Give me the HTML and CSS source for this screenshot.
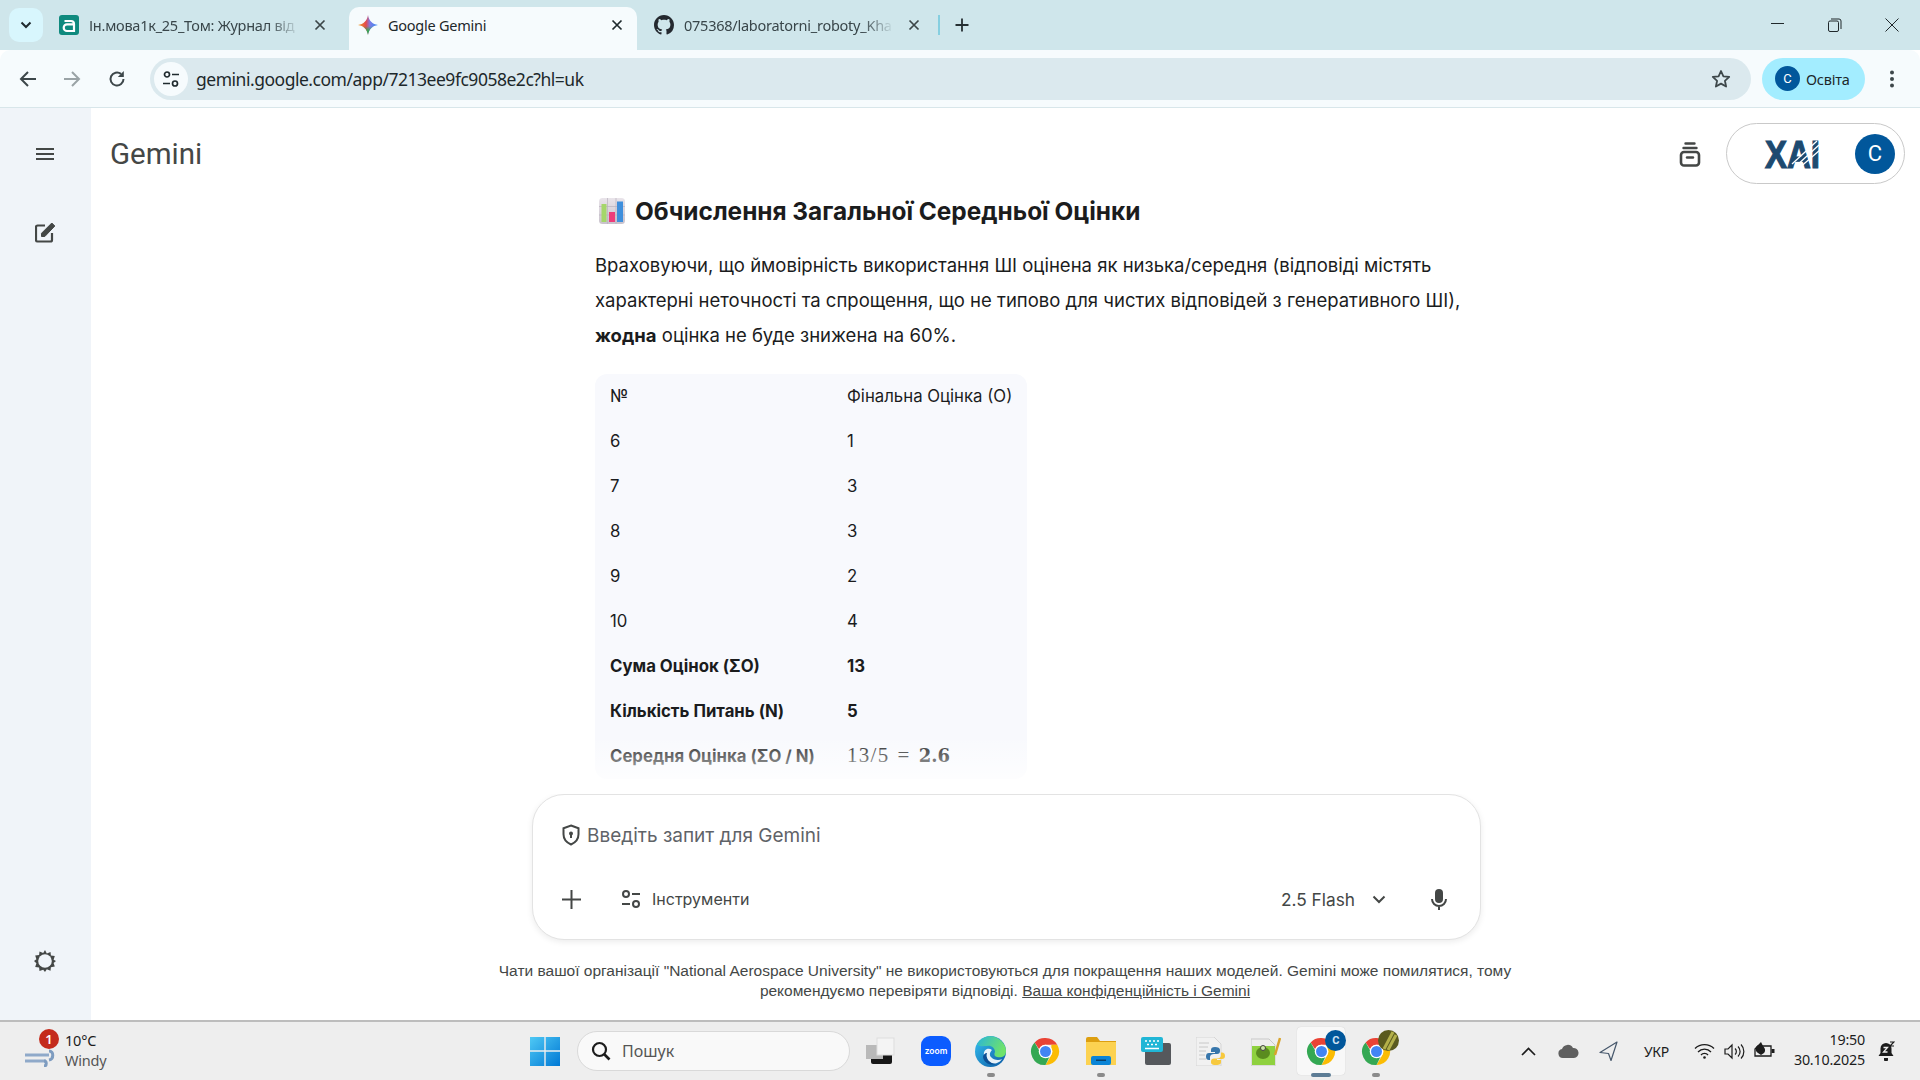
FILE: index.html
```html
<!DOCTYPE html>
<html lang="uk">
<head>
<meta charset="utf-8">
<title>Google Gemini</title>
<link rel="stylesheet" href="styles.css">
</head>
<body>
<svg class="defs" width="0" height="0" aria-hidden="true">
  <defs>
    <symbol id="chrome" viewBox="0 0 48 48">
      <path fill="#ea4335" d="M24 3a21 21 0 0 1 18.200 10.500H24a10.500 10.500 0 0 0-9.900 7L7.200 9.900A21 21 0 0 1 24 3z"/>
      <path fill="#fbbc04" d="M42.200 13.500A21 21 0 0 1 24 45l9.100-15.700a10.500 10.500 0 0 0 0-10.500L33 13.500z"/>
      <path fill="#34a853" d="M7.200 9.900 16 25.500l1 3.300A10.500 10.500 0 0 0 30 32.500L24 45A21 21 0 0 1 7.200 9.900z"/>
      <circle cx="24" cy="24" r="10.500" fill="#fff"/>
      <circle cx="24" cy="24" r="8.500" fill="#4285f4"/>
    </symbol>
  </defs>
</svg>

<header class="tabstrip">
  <button class="tab-list"><svg width="12" height="8" viewBox="0 0 12 8"><path d="M1.500 1.500 6 6l4.500-4.500" fill="none" stroke="#1f2a2e" stroke-width="2"/></svg></button>
  <div class="tab tab-first">
    <svg class="fav" width="20" height="20" viewBox="0 0 20 20"><rect width="20" height="20" rx="3" fill="#0f8a7e"/><path d="M5.500 6h6.500a3 3 0 0 1 3 3v7h-7a3.300 3.300 0 0 1 0-6.600h6.800" fill="none" stroke="#fff" stroke-width="2.200"/></svg>
    <span class="tab-title">Ін.мова1к_25_Том: Журнал від</span>
    <svg class="tab-x" width="12" height="12" viewBox="0 0 12 12"><path d="M1.500 1.500l9 9M10.500 1.500l-9 9" stroke="#3c4648" stroke-width="1.700"/></svg>
  </div>
  <div class="tab tab-active">
    <svg class="fav" width="20" height="20" viewBox="0 0 20 20"><defs><linearGradient id="gem" x1="0" y1="0.500" x2="1" y2="0.500"><stop offset="0" stop-color="#f0a020"/><stop offset="0.400" stop-color="#e5484d"/><stop offset="0.600" stop-color="#7b7be8"/><stop offset="1" stop-color="#2f8cf0"/></linearGradient><linearGradient id="gem2" x1="0" y1="0" x2="0" y2="1"><stop offset="0.550" stop-color="#34a853" stop-opacity="0"/><stop offset="0.800" stop-color="#34a853"/></linearGradient></defs><path d="M10 0c.8 5.600 4.400 9.200 10 10-5.600.8-9.200 4.400-10 10-.8-5.600-4.400-9.200-10-10C5.600 9.200 9.200 5.600 10 0z" fill="url(#gem)"/><path d="M10 0c.8 5.600 4.400 9.200 10 10-5.600.8-9.200 4.400-10 10-.8-5.600-4.400-9.200-10-10C5.600 9.200 9.200 5.600 10 0z" fill="url(#gem2)"/></svg>
    <span class="tab-title">Google Gemini</span>
    <svg class="tab-x" width="12" height="12" viewBox="0 0 12 12"><path d="M1.500 1.500l9 9M10.500 1.500l-9 9" stroke="#1f2a2e" stroke-width="1.700"/></svg>
  </div>
  <div class="tab tab-third">
    <svg class="fav" width="20" height="20" viewBox="0 0 16 16"><path fill="#24292f" d="M8 0C3.580 0 0 3.580 0 8c0 3.540 2.290 6.530 5.470 7.590.4.070.55-.17.55-.38 0-.19-.01-.82-.01-1.490-2.010.37-2.530-.49-2.690-.94-.09-.23-.48-.94-.82-1.130-.28-.15-.68-.52-.01-.53.630-.01 1.080.58 1.230.82.720 1.210 1.870.870 2.330.660.070-.520.280-.870.510-1.070-1.780-.200-3.640-.890-3.640-3.950 0-.870.310-1.590.820-2.150-.080-.200-.360-1.020.080-2.120 0 0 .670-.210 2.200.820.640-.180 1.320-.270 2-.270s1.360.090 2 .270c1.530-1.040 2.200-.820 2.200-.820.440 1.100.160 1.920.080 2.120.510.560.820 1.270.820 2.150 0 3.070-1.870 3.750-3.650 3.950.290.250.540.730.540 1.480 0 1.070-.010 1.930-.010 2.200 0 .210.150.460.550.380A8.010 8.010 0 0 0 16 8c0-4.420-3.580-8-8-8z"/></svg>
    <span class="tab-title">075368/laboratorni_roboty_Kha</span>
    <svg class="tab-x" width="12" height="12" viewBox="0 0 12 12"><path d="M1.500 1.500l9 9M10.500 1.500l-9 9" stroke="#3c4648" stroke-width="1.700"/></svg>
  </div>
  <span class="tab-sep"></span>
  <svg class="new-tab" width="14" height="14" viewBox="0 0 14 14"><path d="M7 .5v13M.5 7h13" stroke="#263033" stroke-width="1.800"/></svg>
  <div class="win-ctrls">
    <svg width="14" height="14" viewBox="0 0 14 14"><path d="M0 5.500h13" stroke="#20282b" stroke-width="1"/></svg>
    <svg width="14" height="14" viewBox="0 0 14 14"><rect x=".5" y="3" width="10" height="10.500" rx="1.500" fill="none" stroke="#20282b"/><path d="M3 1h8a2 2 0 0 1 2 2v8" fill="none" stroke="#20282b"/></svg>
    <svg width="14" height="14" viewBox="0 0 14 14"><path d="M.5.500l13 13M13.500.5l-13 13" stroke="#20282b" stroke-width="1"/></svg>
  </div>
</header>

<nav class="toolbar">
  <svg class="tb-ic" width="18" height="18" viewBox="0 0 18 18"><path d="M17 9H2M9 2 2 9l7 7" fill="none" stroke="#3d474a" stroke-width="2"/></svg>
  <svg class="tb-ic" width="18" height="18" viewBox="0 0 18 18"><path d="M1 9h15M9 2l7 7-7 7" fill="none" stroke="#9aa3a6" stroke-width="2"/></svg>
  <svg class="tb-ic tb-reload" width="18" height="18" viewBox="0 0 18 18"><path d="M15.500 9A6.500 6.500 0 1 1 13 3.900" fill="none" stroke="#3d474a" stroke-width="2"/><path d="M15.800 1v6h-6z" fill="#3d474a"/></svg>
  <div class="omnibox">
    <span class="site-info"><svg width="18" height="18" viewBox="0 0 18 18"><circle cx="5" cy="4.500" r="2.500" fill="none" stroke="#1f2a2e" stroke-width="1.700"/><path d="M10 4.500h7M1 13.500h7" stroke="#1f2a2e" stroke-width="1.700"/><circle cx="13" cy="13.500" r="2.500" fill="none" stroke="#1f2a2e" stroke-width="1.700"/></svg></span>
    <span class="url">gemini.google.com/app/7213ee9fc9058e2c?hl=uk</span>
    <svg class="star" width="20" height="20" viewBox="0 0 20 20"><path d="M10 2l2.400 5.300 5.800.6-4.300 3.900 1.200 5.700L10 14.600l-5.100 2.900 1.200-5.700-4.300-3.900 5.800-.6z" fill="none" stroke="#3d474a" stroke-width="1.800" stroke-linejoin="round"/></svg>
  </div>
  <div class="profile"><span class="avatar-sm">C</span><span class="profile-name">Освіта</span></div>
  <svg class="kebab" width="6" height="18" viewBox="0 0 6 18"><circle cx="3" cy="2.500" r="2" fill="#3d474a"/><circle cx="3" cy="9" r="2" fill="#3d474a"/><circle cx="3" cy="15.500" r="2" fill="#3d474a"/></svg>
</nav>

<main class="app">
  <aside class="sidebar">
    <svg class="side-menu" width="18" height="14" viewBox="0 0 18 14"><path d="M0 2h18M0 7h18M0 12h18" stroke="#444746" stroke-width="2"/></svg>
    <svg class="side-edit" width="21" height="21" viewBox="0 0 21 21"><path d="M10 3.500H2.500a1.500 1.500 0 0 0-1.500 1.500v13a1.500 1.500 0 0 0 1.500 1.500h13a1.500 1.500 0 0 0 1.500-1.500V11" fill="none" stroke="#444746" stroke-width="2.200"/><path d="M6.500 14.500v-3.200L16.800 1l3 3-10 10.500z" fill="#444746" stroke="#444746" stroke-width="1" stroke-linejoin="round"/></svg>
    <svg class="side-settings" width="22" height="22" viewBox="0 0 22 22"><path d="M11 0l1.800 3.400 3.700-1.400.4 3.500 3.900.6-1.200 3.700L22 11l-2.400 1.900 1.200 3.700-3.900.6-.4 3.500-3.700-1.400L11 22l-1.800-2.300-3.700 1.400-.4-3.500-3.900-.6 1.200-3.700L0 11l2.400-1.700-1.200-3.700 3.900-.6.4-3.500 3.700 1.400z" fill="#444746"/><circle cx="11" cy="11" r="6.800" fill="#f0f4f9"/></svg>
  </aside>

  <section class="content">
    <div class="top">
      <span class="brand">Gemini</span>
      <svg class="archive" width="22" height="25" viewBox="0 0 22 25"><path d="M6.500 1.500h9M4.500 6h13" stroke="#444746" stroke-width="2.400" stroke-linecap="round"/><rect x="2" y="10" width="18" height="13.500" rx="3" fill="none" stroke="#444746" stroke-width="2.600"/><path d="M8 15.500h6" stroke="#444746" stroke-width="2.400" stroke-linecap="round"/></svg>
      <div class="account">
        <svg class="xai" width="56" height="32" viewBox="0 0 56 32">
          <text class="xai-text" x="0" y="30" textLength="55" lengthAdjust="spacingAndGlyphs">XAI</text>
          <path d="M27 26 52 3M30 29 54 7M33 31 55 12" stroke="#fff" stroke-width="1.300"/>
        </svg>
        <span class="avatar-lg">C</span>
      </div>
    </div>

    <div class="chat">
      <article class="answer">
        <h2 class="answer-title">
          <svg class="chart-emoji" width="26" height="26" viewBox="0 0 26 26"><defs><linearGradient id="cb" x1="0" x2="0" y1="0" y2="1"><stop offset="0" stop-color="#e9e4ea"/><stop offset="1" stop-color="#c9c2cc"/></linearGradient></defs><rect width="26" height="26" rx="3.500" fill="url(#cb)"/><path d="M0 8.500h26M0 17h26M8.500 0v26M17 0v26" stroke="#b9b2bd" stroke-width=".7"/><rect x="2.500" y="6" width="5" height="18" fill="#a5d66b"/><rect x="10" y="14" width="6" height="10" fill="#ee3d7a"/><rect x="18" y="3.500" width="6" height="20.500" fill="#3f8fdc"/></svg>
          <span>Обчислення Загальної Середньої Оцінки</span>
        </h2>
        <p class="answer-text">Враховуючи, що ймовірність використання ШІ оцінена як низька/середня (відповіді містять характерні неточності та спрощення, що не типово для чистих відповідей з генеративного ШІ), <strong>жодна</strong> оцінка не буде знижена на 60%.</p>
        <table class="grades">
          <tr><td>№</td><td>Фінальна Оцінка (О)</td></tr>
          <tr><td>6</td><td>1</td></tr>
          <tr><td>7</td><td>3</td></tr>
          <tr><td>8</td><td>3</td></tr>
          <tr><td>9</td><td>2</td></tr>
          <tr><td>10</td><td>4</td></tr>
          <tr><td><b>Сума Оцінок (ΣО)</b></td><td><b>13</b></td></tr>
          <tr><td><b>Кількість Питань (N)</b></td><td><b>5</b></td></tr>
          <tr><td><b>Середня Оцінка (ΣО / N)</b></td><td class="math">13/5 = <b>2.6</b></td></tr>
        </table>
      </article>
      <div class="fade"></div>
    </div>

    <div class="composer">
      <div class="prompt">
        <svg width="20" height="22" viewBox="0 0 20 22"><path d="M10 1.500l7.500 2.800v6c0 4.700-3.100 8.300-7.500 10.200-4.400-1.900-7.500-5.500-7.500-10.200v-6z" fill="none" stroke="#444746" stroke-width="2"/><circle cx="10" cy="9.500" r="2" fill="#444746"/><path d="M10 10v4" stroke="#444746" stroke-width="2"/></svg>
        <span>Введіть запит для Gemini</span>
      </div>
      <div class="actions">
        <svg class="plus" width="19" height="19" viewBox="0 0 19 19"><path d="M9.500 0v19M0 9.500h19" stroke="#444746" stroke-width="2"/></svg>
        <svg class="tools-ic" width="20" height="20" viewBox="0 0 20 20"><circle cx="5" cy="5" r="3" fill="none" stroke="#444746" stroke-width="2"/><path d="M11 5h8M1 15h8" stroke="#444746" stroke-width="2"/><circle cx="15" cy="15" r="3" fill="none" stroke="#444746" stroke-width="2"/></svg>
        <span class="tools">Інструменти</span>
        <span class="model">2.5 Flash</span>
        <svg class="chev" width="14" height="9" viewBox="0 0 14 9"><path d="M1.500 1.500 7 7l5.500-5.500" fill="none" stroke="#444746" stroke-width="2"/></svg>
        <svg class="mic" width="16" height="21" viewBox="0 0 16 21"><rect x="4" y="0" width="8" height="14" rx="4" fill="#444746"/><path d="M1 10a7 7 0 0 0 14 0M8 17v4" fill="none" stroke="#444746" stroke-width="2"/></svg>
      </div>
    </div>
    <p class="disclaimer">Чати вашої організації "National Aerospace University" не використовуються для покращення наших моделей. Gemini може помилятися, тому рекомендуємо перевіряти відповіді. <a>Ваша конфіденційність і Gemini</a></p>
  </section>
</main>

<footer class="taskbar">
  <div class="weather">
    <svg class="wind" width="30" height="18" viewBox="0 0 30 18"><path d="M0 6h24M0 12h21" stroke="#8fa9c9" stroke-width="3"/><path d="M24 2c5 0 5 8 0 9" fill="none" stroke="#7e9cc0" stroke-width="3"/><path d="M19 12c3 0 3 5 0 5" fill="none" stroke="#7e9cc0" stroke-width="3"/></svg>
    <span class="badge">1</span>
    <div class="weather-text"><span class="temp">10°C</span><span class="cond">Windy</span></div>
  </div>
  <svg class="winlogo" width="30" height="30" viewBox="0 0 30 30"><defs><linearGradient id="w" x1="0" y1="0" x2="1" y2="1"><stop offset="0" stop-color="#4fc9f5"/><stop offset="1" stop-color="#0078d4"/></linearGradient></defs><path d="M0 1h14.300v13.300H0zM15.700 1H30v13.300H15.700zM0 15.700h14.300V30H0zM15.700 15.700H30V30H15.700z" fill="url(#w)"/></svg>
  <div class="search">
    <svg width="20" height="20" viewBox="0 0 20 20"><circle cx="8.500" cy="8.500" r="6.500" fill="none" stroke="#1c1c1c" stroke-width="2.200"/><path d="M13 13l5.500 5.500" stroke="#1c1c1c" stroke-width="2.600"/></svg>
    <span>Пошук</span>
  </div>
  <div class="apps">
    <span class="app-ic"><svg width="30" height="30" viewBox="0 0 30 30"><rect x="5" y="9" width="21" height="19" rx="2" fill="#161616"/><rect x="0" y="9" width="17" height="14" fill="#b9b9b9"/><rect x="11" y="2" width="17" height="17" fill="#f4f4f4" stroke="#ddd"/></svg></span>
    <span class="app-ic"><svg width="30" height="30" viewBox="0 0 30 30"><rect width="30" height="30" rx="9" fill="#0b5cff"/><text class="zoom-text" x="15" y="18" text-anchor="middle">zoom</text></svg></span>
    <span class="app-ic run"><svg width="31" height="31" viewBox="0 0 31 31"><defs><linearGradient id="e1" x1="0" y1="0" x2="1" y2="1"><stop offset="0" stop-color="#35c1f1"/><stop offset="1" stop-color="#0c59a4"/></linearGradient><linearGradient id="e2" x1="0" y1="0" x2="1" y2="0.400"><stop offset="0" stop-color="#2ab5d8"/><stop offset="1" stop-color="#6fe36a"/></linearGradient></defs><circle cx="15.500" cy="15.500" r="15.500" fill="url(#e1)"/><path d="M2 8C6 1 14-1 20 1c6 2 11 8 11 14 0 6-5 7-9 6-3-1-3-3-2-5 0-4-4-7-8-6-5 0-8 1-10-2z" fill="url(#e2)"/><path d="M17 14c-4-3-9 0-8 5 1 6 7 10 13 8 2-1 4-2 5-4-3 2-9 1-11-2-2-2-1-5 1-7z" fill="#fff" opacity=".9"/><path d="M12 17c-2 5 3 11 9 11-6 2-12-1-13-7 0-2 2-4 4-4z" fill="#0c4f94"/></svg></span>
    <span class="app-ic"><svg width="31" height="31"><use href="#chrome"/></svg></span>
    <span class="app-ic run"><svg width="30" height="28" viewBox="0 0 30 28"><path d="M0 2a2 2 0 0 1 2-2h9l3 4h16v6H0z" fill="#dd9f10"/><rect y="5" width="30" height="23" fill="#fcd251"/><rect x="5" y="19" width="20" height="9" rx="2" fill="#0a84d6"/><rect x="10" y="22.500" width="10" height="1.500" fill="#08406c"/></svg></span>
    <span class="app-ic"><svg width="30" height="28" viewBox="0 0 30 28"><rect x="4" y="6" width="26" height="22" rx="2" fill="#55585c"/><rect y="0" width="22" height="15" rx="2" fill="#20b6d6"/><path d="M4 4h2M8 4h2M12 4h2M16 4h2M6 7.500h2M10 7.500h2M14 7.500h2" stroke="#fff" stroke-width="1.500"/><path d="M4 11.500h14" stroke="#fff" stroke-width="1.500"/></svg></span>
    <span class="app-ic"><svg width="30" height="29" viewBox="0 0 30 29"><path d="M0 0h18l7 7v22H0z" fill="#f1f1f1" stroke="#d5d5d5"/><path d="M3 6h10M3 10h9M3 14h7M3 18h6M3 22h7" stroke="#c8c8c8"/><path d="M19 10c-3 0-4 1-4 3v2h4v1h-6c-2 0-3 1-3 3.500s1 3.500 3 3.500h1v-3c0-2 2-3 4-3h3c2 0 3-1 3-3v-1c0-2-2-3-5-3z" fill="#3776ab"/><path d="M20 28c4 0 5-1 5-3v-2h-4v-1h5c2 0 3-1 3-3s-1-3.500-3-3.500h-1v3c0 2-2 3-4 3h-3c-2 0-3 1-3 3v1c0 2 2 2.500 5 2.500z" fill="#f7c93e"/></svg></span>
    <span class="app-ic"><svg width="30" height="29" viewBox="0 0 30 29"><path d="M0 2h18l6 6v21H0z" fill="#eee" stroke="#c9c9c9"/><rect x="1" y="9" width="23" height="19" fill="#8fd13f"/><ellipse cx="12" cy="16" rx="7" ry="6" fill="#5a8c1f"/><circle cx="12" cy="11" r="2.500" fill="#cde5a7" stroke="#444"/><path d="M24 18 29 1" stroke="#d9a32c" stroke-width="2.500"/></svg></span>
    <span class="app-ic active"><svg class="chrome-big" width="31" height="31"><use href="#chrome"/></svg><span class="chrome-badge">C</span></span>
    <span class="app-ic run"><svg class="chrome-big" width="31" height="31"><use href="#chrome"/></svg><svg class="photo-badge" width="21" height="21" viewBox="0 0 21 21"><circle cx="10.500" cy="10.500" r="10.500" fill="#5a5a1e"/><path d="M6 19 15 2M10 20 18 5" stroke="#b3b04a" stroke-width="3"/></svg></span>
  </div>
  <div class="tray">
    <svg class="t-chev" width="15" height="9" viewBox="0 0 15 9"><path d="M1 8l6.500-6.500L14 8" fill="none" stroke="#1c1c1c" stroke-width="1.700"/></svg>
    <svg class="t-cloud" width="21" height="14" viewBox="0 0 21 14"><path d="M5 14a4.500 4.500 0 0 1-1-8.900A6 6 0 0 1 15 4a5 5 0 0 1 1 10z" fill="#5f5f5f"/></svg>
    <svg class="t-nav" width="19" height="20" viewBox="0 0 19 20"><path d="M18 1 1 11.500l8.500 1L12 19.500z" fill="none" stroke="#46576b" stroke-width="1.200" stroke-linejoin="round"/></svg>
    <span class="lang">УКР</span>
    <svg class="t-wifi" width="21" height="16" viewBox="0 0 21 16"><path d="M1 5.500a13.500 13.500 0 0 1 19 0M4 9a9 9 0 0 1 13 0M7 12a4.500 4.500 0 0 1 7 0" fill="none" stroke="#1c1c1c" stroke-width="1.300"/><circle cx="10.500" cy="14.500" r="1.300" fill="#1c1c1c"/></svg>
    <svg class="t-vol" width="21" height="17" viewBox="0 0 21 17"><path d="M1 6h3l4-4v13l-4-4H1z" fill="none" stroke="#1c1c1c" stroke-width="1.200"/><path d="M11 5.500a4 4 0 0 1 0 6M14 3.500a7 7 0 0 1 0 10M17 1.500a10 10 0 0 1 0 14" fill="none" stroke="#1c1c1c" stroke-width="1.200"/></svg>
    <svg class="t-bat" width="21" height="18" viewBox="0 0 21 18"><path d="M4 4h13v10H1V7z" fill="none" stroke="#1c1c1c" stroke-width="1.300"/><rect x="17.500" y="7" width="3" height="4" fill="#1c1c1c"/><path d="M7 0 2 5c-1 2 0 5 2 6l3 2 3-2c2-2 1-5-1-7z" fill="#1c1c1c"/></svg>
    <div class="clock"><span>19:50</span><span>30.10.2025</span></div>
    <svg class="t-bell" width="17" height="20" viewBox="0 0 17 20"><path d="M8 2a5.500 5.500 0 0 0-5.500 5.500V12L.5 15h15l-2-3V7.500A5.500 5.500 0 0 0 8 2z" fill="#1c1c1c"/><path d="M6 17h4v1.500a2 2 0 0 1-4 0z" fill="#1c1c1c"/><path d="M5.500 6.500h4l-4 4.500h4" fill="none" stroke="#eee" stroke-width="1.300"/><path d="M12 1h4l-4 4h4" fill="none" stroke="#1c1c1c" stroke-width="1.200"/></svg>
  </div>
</footer>
</body>
</html>
```

FILE: styles.css
```css
* { box-sizing: border-box; }
html, body { margin: 0; height: 1080px; overflow: hidden; }
body { width: 1920px; display: flex; flex-direction: column; font-family: "Inter", "Liberation Sans", sans-serif; background: #fff; }
.defs { position: absolute; }

/* tab strip */
.tabstrip { height: 50px; flex: none; background: #cfe6eb; display: flex; align-items: flex-end; padding-left: 9px; position: relative; }
.tab-list { width: 34px; height: 34px; align-self: flex-start; margin-top: 8px; border: 0; border-radius: 10px; background: #d8f6fd; display: flex; align-items: center; justify-content: center; padding: 0; margin-right: 9px; }
.tab { height: 43px; display: flex; align-items: center; padding: 0 13px 8px 8px; font: 14.500px "Noto Sans", "Liberation Sans", sans-serif; color: #39464a; }
.tab-first { width: 297px; padding-left: 7px; padding-right: 23px; }
.tab-active { width: 288px; background: #f6fbfd; border-radius: 10px 10px 0 0; color: #1d282b; padding-left: 9px; padding-right: 14px; }
.tab-third { width: 303px; padding-left: 17px; padding-right: 20px; }
.tab .fav { flex: none; margin-right: 10px; }
.tab-title { flex: 1; white-space: nowrap; overflow: hidden; -webkit-mask-image: linear-gradient(90deg, #000 85%, transparent 100%); mask-image: linear-gradient(90deg, #000 85%, transparent 100%); letter-spacing: -.25px; }
.tab-active .tab-title { -webkit-mask-image: none; mask-image: none; }
.tab-x { flex: none; margin-left: 14px; }
.tab-sep { width: 2px; height: 20px; background: #86cfe0; align-self: flex-start; margin-top: 15px; margin-left: -2px; }
.new-tab { align-self: flex-start; margin-top: 18px; margin-left: 15px; }
.win-ctrls { position: absolute; right: 21px; top: 18px; display: flex; gap: 43px; }

/* toolbar */
.toolbar { height: 58px; flex: none; background: #f6fbfd; border-bottom: 1px solid #d8e6ea; border-radius: 10px 10px 0 0; display: flex; align-items: center; padding-left: 19px; }
.tb-ic { flex: none; margin-right: 26px; }
.tb-reload { margin-left: 1px; margin-right: 25px; }
.omnibox { flex: none; width: 1601px; height: 42px; border-radius: 21px; background: #dbe9ee; display: flex; align-items: center; padding-left: 4px; margin-left: -1px; }
.site-info { width: 34px; height: 34px; border-radius: 50%; background: #f6fbfd; display: flex; align-items: center; justify-content: center; flex: none; }
.url { margin-left: 8px; font: 17.500px "Noto Sans", "Liberation Sans", sans-serif; color: #1d282b; letter-spacing: -.48px; flex: 1; }
.star { margin-right: 20px; flex: none; }
.profile { width: 103px; height: 42px; margin-left: 11px; border-radius: 21px; background: #a3edff; display: flex; align-items: center; padding-left: 13px; flex: none; }
.avatar-sm { width: 25px; height: 25px; border-radius: 50%; background: #01579b; color: #fff; font: 13px "Roboto", sans-serif; display: flex; align-items: center; justify-content: center; }
.profile-name { margin-left: 6px; font: 14.500px "Noto Sans", sans-serif; color: #1d282b; letter-spacing: -.2px; }
.kebab { margin-left: 24px; flex: none; }

/* app */
.app { height: 912px; flex: none; display: flex; }
.sidebar { width: 91px; flex: none; background: #f0f4f9; position: relative; display: flex; flex-direction: column; align-items: center; padding: 39px 1px 0 0; }
.side-edit { margin-top: 61px; }
.side-settings { margin-top: auto; margin-bottom: 48px; }
.content { flex: 1; display: flex; flex-direction: column; min-width: 0; }
.top { height: 80px; flex: none; display: flex; align-items: flex-start; padding: 15px 15px 0 19px; }
.brand { height: 61px; font: 400 29.500px/62px "Roboto", sans-serif; color: #444746; }
.archive { margin-left: auto; margin-top: 19px; margin-right: 25px; }
.account { width: 179px; height: 61px; border: 1px solid #c9c9c9; border-radius: 31px; display: flex; align-items: center; padding-left: 38px; }
.xai { flex: none; overflow: visible; }
.xai-text { font: 700 38px "Liberation Sans", sans-serif; fill: #1d4a70; stroke: #1d4a70; stroke-width: 1.200px; }
.avatar-lg { width: 40px; height: 40px; border-radius: 50%; background: #01579b; color: #fff; font: 22px "Roboto", sans-serif; display: flex; align-items: center; justify-content: center; margin-left: 34px; flex: none; }

/* chat */
.chat { flex: 1; min-height: 0; overflow: hidden; position: relative; padding: 8px 0 0 504px; }
.answer { width: 880px; color: #1b1c1d; }
.answer-title { margin: 0; display: flex; align-items: center; gap: 10px; height: 30px; font: 700 24.400px/30px "Inter", sans-serif; }
.chart-emoji { flex: none; margin-left: 4px; }
.answer-text { margin: 22px 0 21px; font: 400 18.500px/35px "Inter", sans-serif; }
.answer-text strong { font-weight: 700; }
.grades { border-collapse: collapse; width: 432px; background: #f8f9fd; border-radius: 12px; font: 400 16.750px "Inter", sans-serif; }
.grades td { height: 45px; padding: 0 0 2px 15px; }
.grades td:first-child { width: 237px; }
.grades b { font-weight: 700; }
.grades .math { font: 400 21px "Liberation Serif", serif; word-spacing: 1.500px; letter-spacing: 1.300px; }
.grades .math b { font: 700 18px "DejaVu Serif", serif; letter-spacing: 0; }
.fade { position: absolute; left: 0; right: 0; bottom: 0; height: 58px; background: linear-gradient(rgba(255,255,255,0), #fff); }

/* composer */
.composer { flex: none; width: 949px; height: 146px; margin-left: 441px; background: #fff; border: 1px solid #e3e3e3; border-radius: 32px; box-shadow: 0 2px 6px rgba(0,0,0,.08); padding: 28px 33px 0 28px; }
.prompt { display: flex; align-items: center; gap: 6px; height: 24px; font: 400 19px "Inter", sans-serif; color: #5f6368; }
.actions { display: flex; align-items: center; height: 24px; margin-top: 40px; font: 400 16px "Inter", sans-serif; color: #444746; }
.plus { margin-left: 1px; }
.tools-ic { margin-left: 40px; }
.tools { margin-left: 11px; }
.model { margin-left: auto; font-size: 17.300px; }
.chev { margin-left: 17px; }
.mic { margin-left: 45px; }
.disclaimer { flex: none; margin: 21px 0 19px 399px; width: 1030px; text-align: center; font: 400 15.500px/20px "Liberation Sans", sans-serif; color: #444746; }
.disclaimer a { text-decoration: underline; }

/* taskbar */
.taskbar { height: 60px; flex: none; background: #eeeeee; border-top: 2px solid #bdbdbd; display: flex; align-items: center; font-family: "Noto Sans", sans-serif; }
.weather { width: 530px; flex: none; display: flex; align-items: center; padding-left: 25px; position: relative; height: 100%; }
.wind { margin-top: 14px; }
.badge { position: absolute; left: 39px; top: 7px; width: 20px; height: 20px; border-radius: 50%; background: #c42b1c; color: #fff; font: 600 13px/20px "Noto Sans", sans-serif; text-align: center; }
.weather-text { display: flex; flex-direction: column; margin-left: 10px; padding-bottom: 2px; font-size: 14.500px; line-height: 20px; color: #1c1c1c; letter-spacing: -.2px; }
.cond { color: #555; }
.winlogo { flex: none; }
.search { width: 273px; height: 40px; margin-left: 17px; border-radius: 20px; background: #f9f9f9; border: 1px solid #d9d9d9; display: flex; align-items: center; padding-left: 13px; gap: 11px; font-size: 16px; color: #555; }
.apps { display: flex; align-items: center; margin-left: 3px; flex: none; }
.app-ic { width: 55.100px; height: 48px; display: flex; align-items: center; justify-content: center; position: relative; border-radius: 4px; }
.zoom-text { font: 600 8.500px "Inter", sans-serif; fill: #fff; }
.run::after, .active::after { content: ""; position: absolute; bottom: -2px; left: 50%; width: 8px; height: 4px; margin-left: -4px; border-radius: 2px; background: #8a8a8a; }
.active { width: 48px; margin: 0 3.550px; background: #f8f8f8; box-shadow: 0 0 1px rgba(0,0,0,.2); }
.active::after { width: 20px; margin-left: -10px; background: #5d7c95; }
.chrome-badge { position: absolute; right: -1px; top: 3px; width: 21px; height: 21px; border-radius: 50%; background: #01579b; color: #cfe2f3; font: 700 11px/21px "Roboto", sans-serif; text-align: center; }
.photo-badge { position: absolute; right: 5px; top: 3px; }
.tray { flex: 1; display: flex; align-items: center; position: relative; padding-left: 117px; color: #1c1c1c; min-width: 0; }
.t-cloud { margin-left: 22px; }
.t-nav { margin-left: 20px; }
.lang { margin-left: 26px; font-size: 14px; letter-spacing: -.3px; }
.t-wifi { margin-left: 25px; }
.t-vol { margin-left: 9px; }
.t-bat { margin-left: 9px; }
.clock { margin-left: auto; padding-bottom: 2px; display: flex; flex-direction: column; align-items: flex-end; font-size: 14.300px; line-height: 20px; letter-spacing: -.2px; }
.t-bell { margin-left: 13px; margin-right: 25px; }
```
